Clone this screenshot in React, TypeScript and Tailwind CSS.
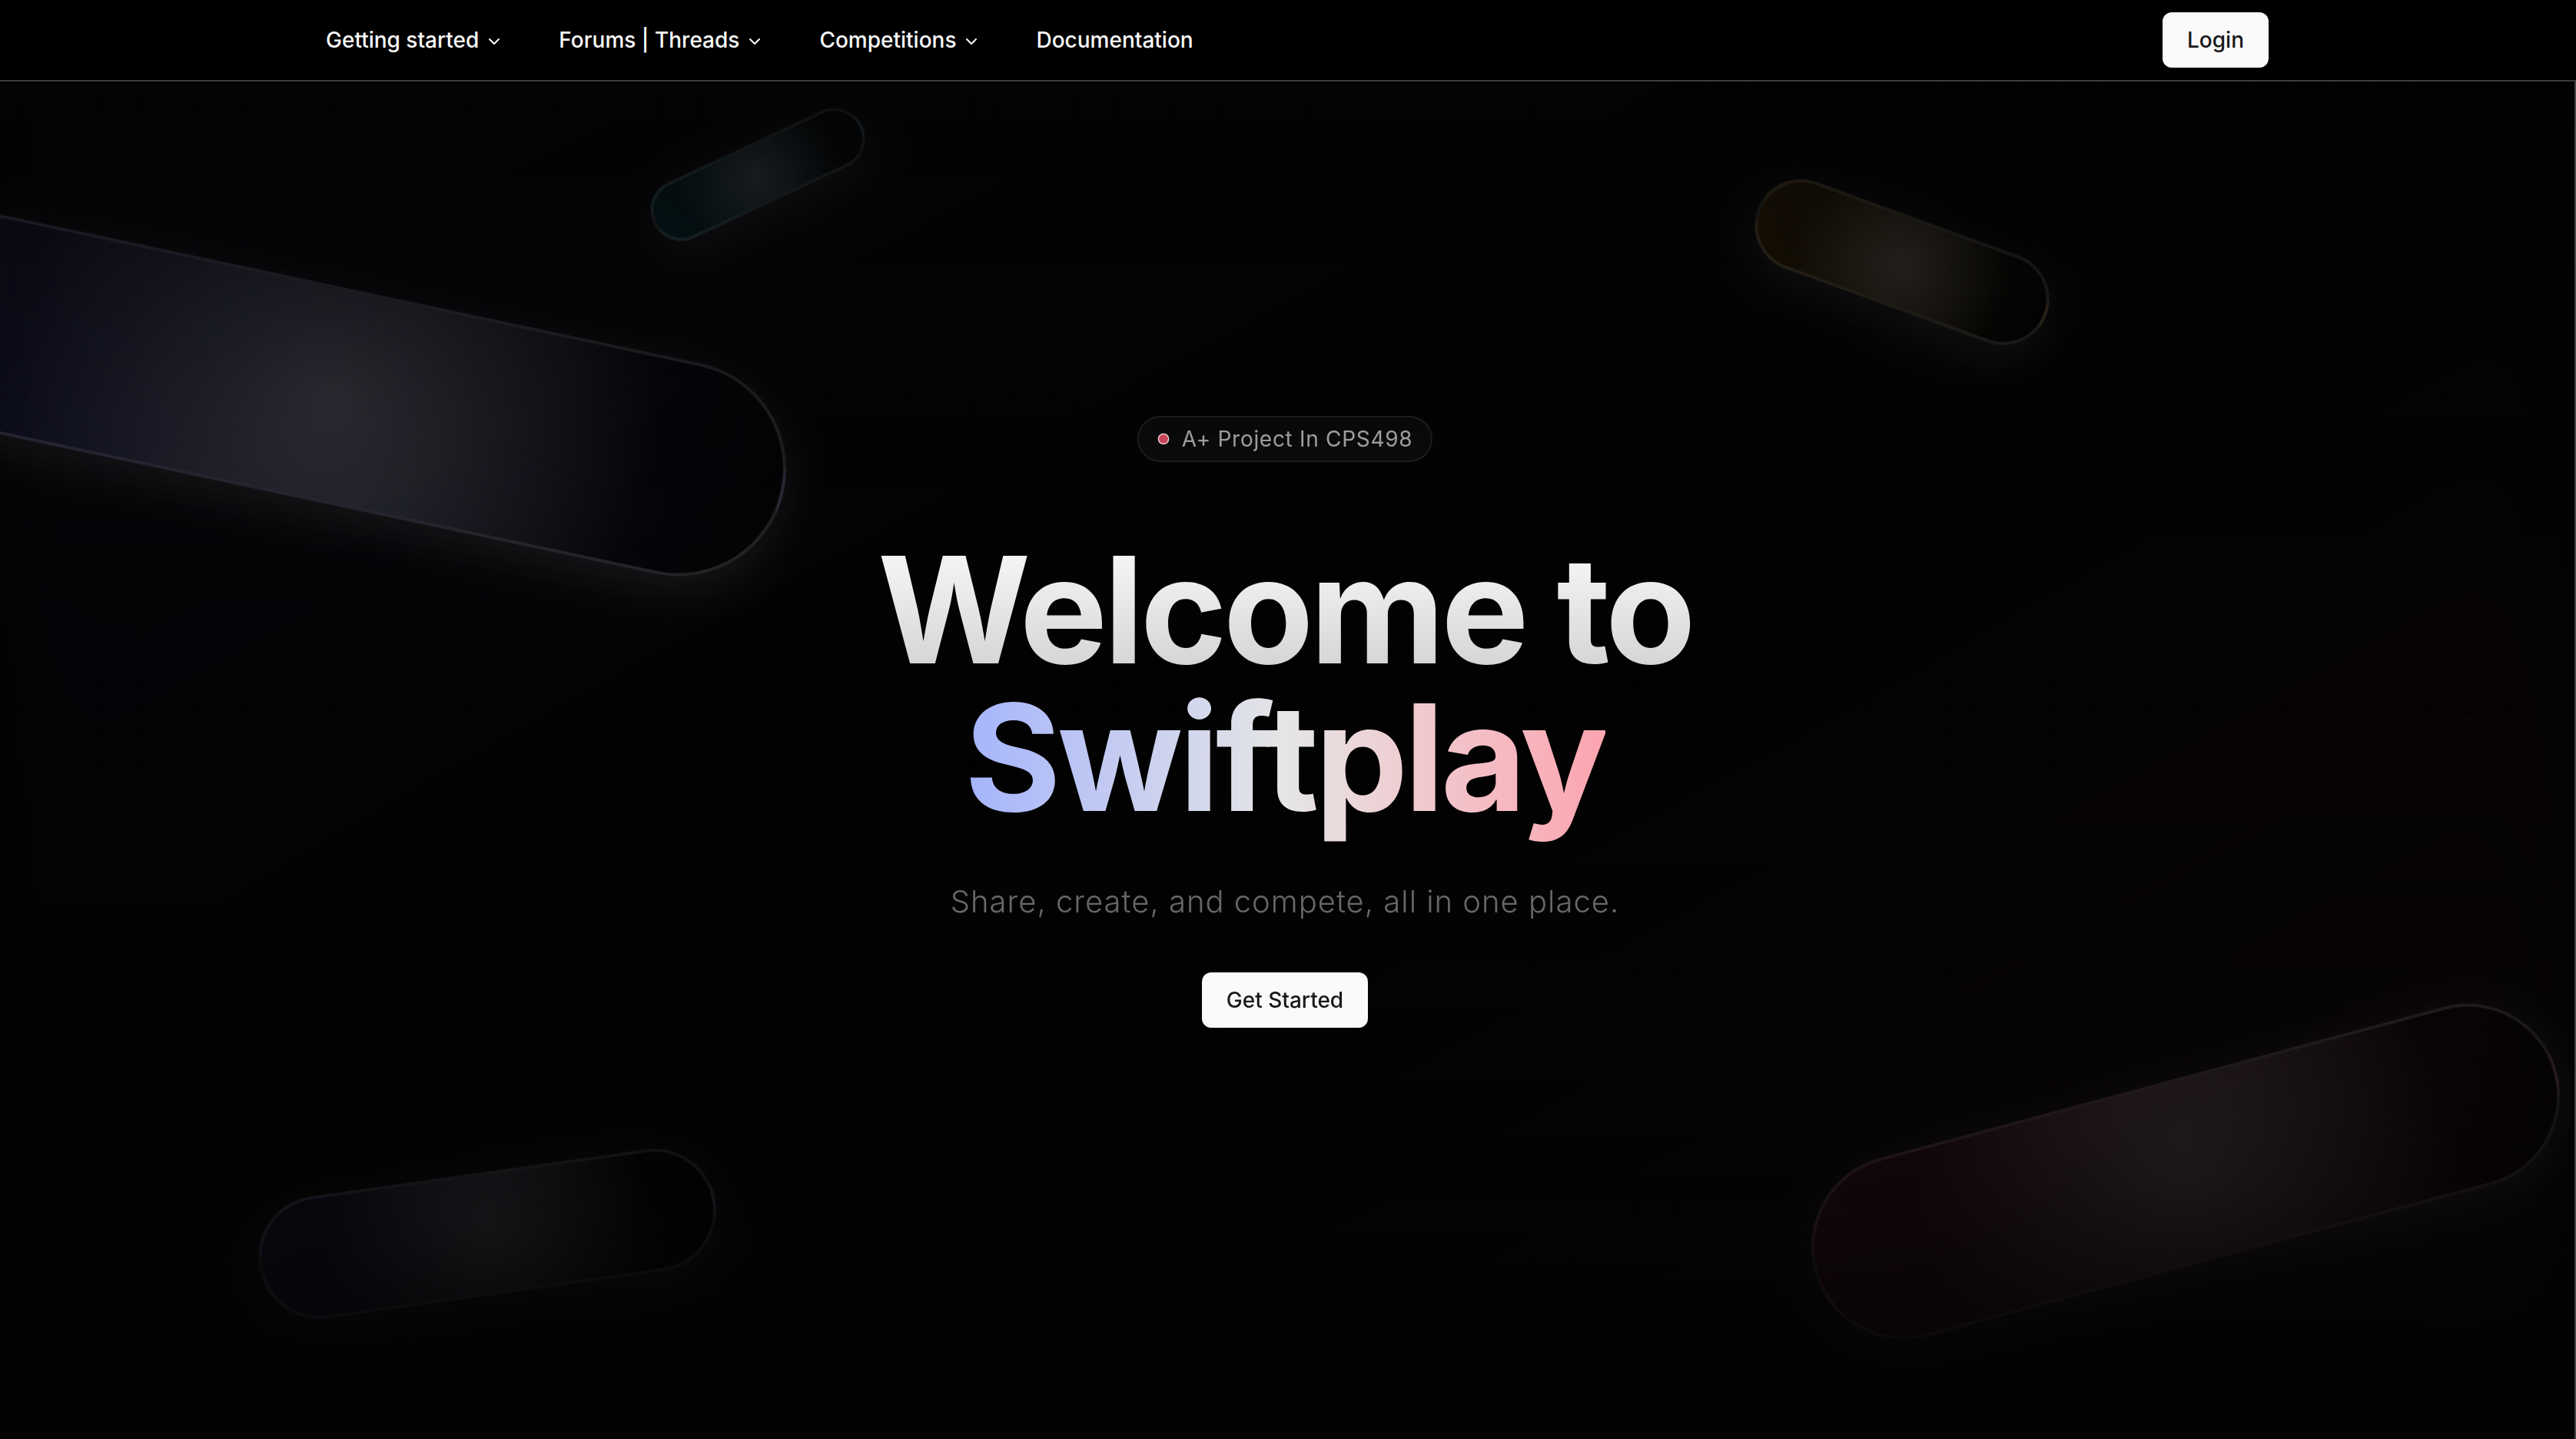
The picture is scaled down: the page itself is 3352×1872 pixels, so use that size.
import React from "react";
import { ChevronDown } from "lucide-react";

// floating pills behind the hero, sizes in page px
const shapes = [
  {
    pos: "left-[-5%] top-[20%]",
    box: "w-[1200px] h-[280px] rotate-[12deg]",
    tint: "from-[#6366f1]/15",
  },
  {
    pos: "right-0 top-[75%]",
    box: "w-[1000px] h-[240px] rotate-[-15deg]",
    tint: "from-[#f43f5e]/15",
  },
  {
    pos: "left-[10%] bottom-[10%]",
    box: "w-[600px] h-[160px] rotate-[-8deg]",
    tint: "from-[#8b5cf6]/15",
  },
  {
    pos: "right-[20%] top-[15%]",
    box: "w-[400px] h-[120px] rotate-[20deg]",
    tint: "from-[#f59e0b]/15",
  },
  {
    pos: "left-[25%] top-[10%]",
    box: "w-[300px] h-[80px] rotate-[-25deg]",
    tint: "from-[#06b6d4]/15",
  },
];

const navItems = [
  { label: "Getting started", menu: true },
  { label: "Forums | Threads", menu: true },
  { label: "Competitions", menu: true },
  { label: "Documentation", menu: false },
];

function Shape({ pos, box, tint }: { pos: string; box: string; tint: string }) {
  return (
    <div className={`absolute ${pos}`}>
      <div className={`relative ${box}`}>
        <div
          className={`absolute inset-0 rounded-full bg-linear-to-r/srgb to-transparent ${tint} backdrop-blur-[4px] border-4 border-white/15 shadow-[0_16px_64px_0_rgba(255,255,255,0.1)]`}
        >
          <div className="absolute inset-0 rounded-full bg-[radial-gradient(circle_at_50%_50%,rgba(255,255,255,0.2),transparent_70%)]" />
        </div>
      </div>
    </div>
  );
}

export default function App() {
  return (
    <div className="flex min-h-screen bg-black font-['Inter',sans-serif] antialiased">
      <header className="fixed top-0 inset-x-0 z-50 bg-black border-b-2 border-[#3c3c3c]">
        <div className="pr-2">
          <div className="max-w-[2560px] mx-auto h-[104px] flex items-center justify-between">
            <ul className="flex items-center gap-2">
              {navItems.map((item) => (
                <li key={item.label}>
                  <button className="inline-flex items-center h-[72px] px-8 rounded-[12px] text-[28px] font-medium text-[#fafafa]">
                    {item.label}
                    {item.menu && (
                      <ChevronDown className="relative top-[2px] ml-2 w-6 h-6" />
                    )}
                  </button>
                </li>
              ))}
            </ul>
            <button className="h-[72px] px-8 rounded-[12px] bg-[#fafafa] text-[#18181b] text-[28px] font-medium">
              Login
            </button>
          </div>
        </div>
      </header>

      <main className="relative flex-1 min-h-screen pt-[5px] flex items-center justify-center overflow-hidden bg-[#030303]">
        <div className="absolute inset-0 bg-linear-to-br/srgb from-[#6366f1]/5 via-transparent to-[#f43f5e]/5 blur-3xl" />
        <div className="absolute inset-0 overflow-hidden">
          {shapes.map((s, i) => (
            <Shape key={i} {...s} />
          ))}
        </div>

        <div className="relative z-10 flex flex-col items-center text-center">
          <div className="inline-flex items-center gap-4 px-6 py-2 rounded-full bg-white/[0.03] border-2 border-white/[0.08] mb-24">
            <svg viewBox="0 0 24 24" className="w-4 h-4">
              <circle cx="12" cy="12" r="10" fill="#c8465a" stroke="#f1d6da" strokeWidth="2" />
            </svg>
            <span className="text-[28px] leading-[40px] text-white/60 tracking-wide">
              A+ Project In CPS498
            </span>
          </div>
          <h1 className="text-[192px] leading-none font-bold tracking-tight mb-16">
            <span className="bg-clip-text text-transparent bg-linear-to-b/srgb from-white to-white/80">
              Welcome to
            </span>
            <br />
            <span className="bg-clip-text text-transparent bg-linear-to-r/srgb from-[#a5b4fc] via-white/90 to-[#fda4af]">
              Swiftplay
            </span>
          </h1>
          <p className="text-[40px] leading-[56px] text-white/40 font-light tracking-wide mb-16">
            Share, create, and compete, all in one place.
          </p>
          <button className="h-[72px] px-8 rounded-[12px] bg-[#fafafa] text-[#18181b] text-[28px] font-medium">
            Get Started
          </button>
        </div>

        <div className="absolute inset-0 bg-linear-to-t/srgb from-[#030303] via-transparent to-[#030303]/80 pointer-events-none" />
      </main>
      <div className="w-2 shrink-0 bg-[#040404] border-r-2 border-[#444]" />
    </div>
  );
}
